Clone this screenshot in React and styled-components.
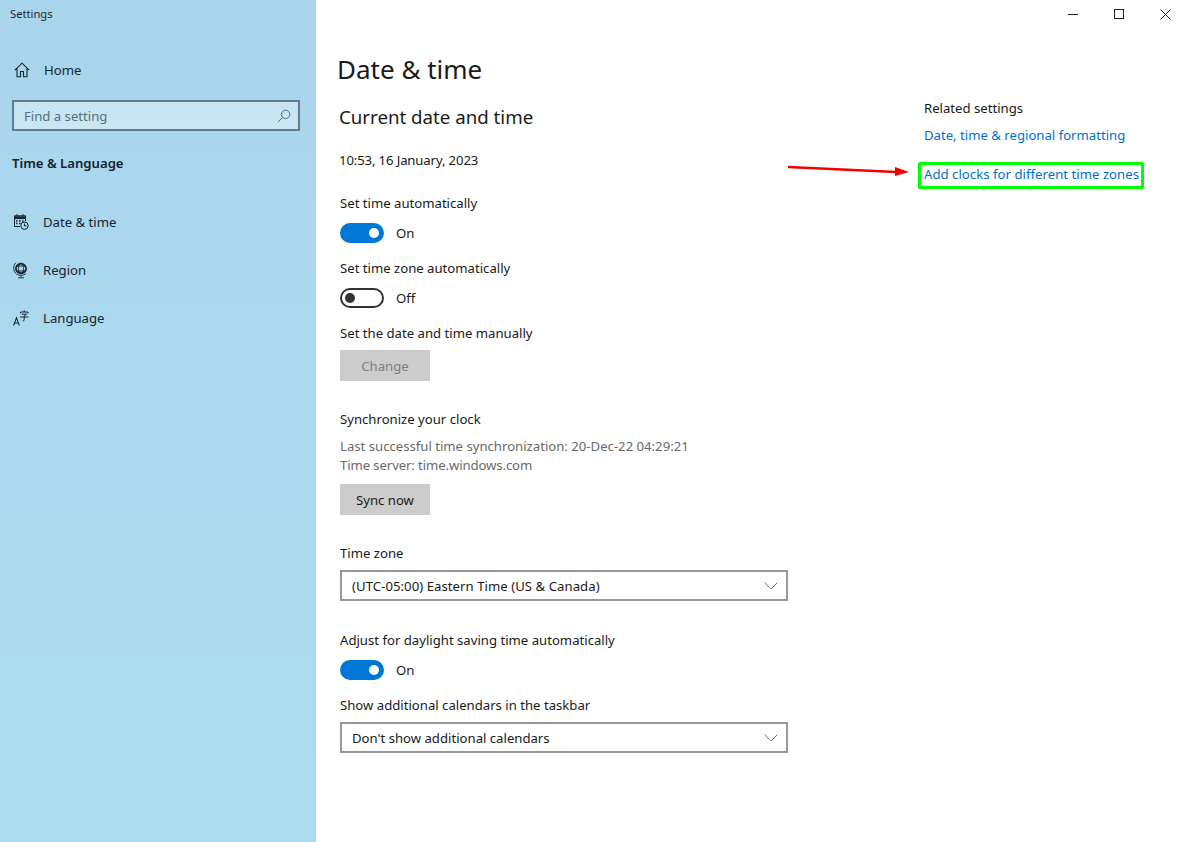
import React from 'react';
import styled, { createGlobalStyle } from 'styled-components';

const Global = createGlobalStyle`
  html, body { margin: 0; padding: 0; background: #fff; }
  body { font-family: "Noto Sans", "Open Sans", sans-serif; color: #1a1a1a; }
  #root { width: 1184px; height: 842px; overflow: hidden; }
`;

const Window = styled.div`
  position: relative;
  display: flex;
  width: 1184px;
  height: 842px;
  background: #fff;
  font-size: 13.15px;
  line-height: 20px;
`;
const Sidebar = styled.aside`
  width: 316px;
  flex: none;
  display: flex;
  flex-direction: column;
  background: linear-gradient(180deg, #a9d5ec 0%, #abd9ef 45%, #acdcf0 100%);
`;
const AppTitle = styled.div`
  font-size: 11.2px;
  line-height: 16px;
  padding: 6px 0 0 10px;
  color: #1c2a33;
`;
const NavItem = styled.div`
  display: flex;
  align-items: center;
  height: 48px;
  padding-left: ${p => p.$left || 13}px;
  gap: ${p => p.$gap || 14}px;
  color: #15252e;
  svg { flex: none; }
`;
const HomeItem = styled(NavItem)`
  margin-top: 24px;
`;
const Search = styled.div`
  margin: 6px 16px 0 12px;
  height: 31px;
  box-sizing: border-box;
  border: 2px solid #5f7f8f;
  background: linear-gradient(180deg, #c5e3f1, #cbe7f4);
  display: flex;
  align-items: center;
  justify-content: space-between;
  padding: 0 7px 0 10px;
  color: #5a6f7a;
`;
const SectionName = styled.div`
  margin: 22px 0 25px 12px;
  font-weight: 600;
  font-size: 13.15px;
  line-height: 20px;
  color: #14232b;
`;
const Main = styled.main`
  flex: 1;
  display: flex;
  min-width: 0;
`;
const Content = styled.div`
  width: 600px;
  flex: none;
  padding: 50px 0 0 22px;
  display: flex;
  flex-direction: column;
  box-sizing: border-box;
`;
const PageTitle = styled.h1`
  margin: 0 0 0 -1px;
  font-weight: 400;
  font-size: 26px;
  line-height: 38px;
  color: #1a1a1a;
`;
const SubTitle = styled.h2`
  margin: 15px 0 0 1px;
  font-weight: 400;
  font-size: 18.7px;
  line-height: 28px;
  color: #1a1a1a;
`;
const Text = styled.div`
  margin: ${p => p.$top || 0}px 0 0 ${p => p.$left ?? 2}px;
  color: ${p => p.$muted ? '#6a6a6a' : '#1a1a1a'};
  line-height: ${p => p.$lh || 20}px;
  letter-spacing: ${p => p.$ls || 0}px;
`;
const ToggleRow = styled.div`
  margin: 10px 0 0 2px;
  height: 20px;
  display: flex;
  align-items: center;
  gap: 12px;
`;
const Track = styled.span`
  position: relative;
  width: 44px;
  height: 20px;
  box-sizing: border-box;
  border-radius: 10px;
  border: 2px solid ${p => p.$on ? '#0078d7' : '#333'};
  background: ${p => p.$on ? '#0078d7' : '#fff'};
  &::after {
    content: '';
    position: absolute;
    top: 3px;
    ${p => p.$on ? 'right: 3px;' : 'left: 3px;'}
    width: 10px;
    height: 10px;
    border-radius: 50%;
    background: ${p => p.$on ? '#fff' : '#333'};
  }
`;
const Button = styled.div`
  margin: ${p => p.$top}px 0 0 2px;
  width: 90px;
  height: 31px;
  display: flex;
  align-items: center;
  justify-content: center;
  background: #cccccc;
  color: ${p => p.$disabled ? '#808080' : '#1a1a1a'};
`;
const Select = styled.div`
  margin: 7px 0 0 2px;
  width: 448px;
  height: 31px;
  box-sizing: border-box;
  border: 2px solid #999;
  display: flex;
  align-items: center;
  justify-content: space-between;
  padding: 0 8px 0 10px;
  color: #1a1a1a;
  letter-spacing: ${p => p.$ls || 0}px;
`;
const Aside = styled.div`
  padding: 98px 0 0 8px;
  display: flex;
  flex-direction: column;
  align-items: flex-start;
`;
const Link = styled.a`
  color: #0072cc;
  display: block;
  margin-top: ${p => p.$top || 0}px;
`;
const Highlight = styled.div`
  margin: 17px 0 0 -6px;
  width: 226px;
  height: 27px;
  box-sizing: border-box;
  border: 3px solid #00ff00;
  border-radius: 2px;
  display: flex;
  align-items: center;
  padding: 0 0 3px 3px;
  white-space: nowrap;
  letter-spacing: 0.03px;
`;
const CaptionControls = styled.div`
  position: absolute;
  top: 0;
  right: 0;
  display: flex;
  height: 28px;
`;
const CaptionBtn = styled.div`
  width: 46px;
  display: flex;
  align-items: center;
  padding-left: 22px;
  box-sizing: border-box;
`;
const Arrow = styled.svg`
  position: absolute;
  left: 786px;
  top: 160px;
`;

const Chevron = () => (
  <svg width="14" height="8" viewBox="0 0 14 8" fill="none" stroke="#777" strokeWidth="1">
    <path d="M.7.7 7 7l6.300-6.300" />
  </svg>
);
const Toggle = ({ on }) => (
  <ToggleRow>
    <Track $on={on} />
    <span>{on ? 'On' : 'Off'}</span>
  </ToggleRow>
);
const HomeIcon = () => (
  <svg width="16" height="16" viewBox="0 0 16 16" fill="none" stroke="#15252e" strokeWidth="1.1">
    <path d="M.8 8.200 8 1.200l7.200 7M3 6.500v8.300h3.500V9.500h3v5.300H13V6.500" />
  </svg>
);
const ClockCalIcon = () => (
  <svg width="16" height="16" viewBox="0 0 16 16" fill="none" stroke="#15252e" strokeWidth="1">
    <path d="M7 12.500H1.500V1.800h11V7" />
    <path d="M1.500 2.800h11v1.800h-11z" fill="#15252e" />
    <path d="M4 .2v2M10 .2v2" />
    <path d="M3 7h1.500M6 7h1.500M9 7h1.500M3 9.500h1.500M6 9.500h1.500" strokeWidth="1.300" />
    <circle cx="11.500" cy="11.700" r="3.700" fill="#abd7ed" />
    <path d="M11.500 9.500v2.400h2" />
  </svg>
);
const GlobeIcon = () => (
  <svg width="16" height="17" viewBox="0 0 16 17" fill="none" stroke="#15252e" strokeWidth=".9">
    <circle cx="8" cy="6.500" r="5.300" />
    <ellipse cx="8" cy="6.500" rx="2.500" ry="5.300" />
    <ellipse cx="8" cy="6.500" rx="4.300" ry="5.300" transform="rotate(60 8 6.500)" />
    <ellipse cx="8" cy="6.500" rx="4.300" ry="5.300" transform="rotate(-60 8 6.500)" />
    <path d="M3 4h10M2.800 9h10.400" />
    <path d="M2.800 .8C-.2 3.800 0 9.500 3.500 12c3 2 7 1.800 9.500-.5M8 13.500v2M5 15.800h6" />
  </svg>
);
const LangIcon = () => (
  <svg width="16" height="17" viewBox="0 0 16 17" fill="none" stroke="#15252e" strokeWidth="1.100">
    <path d="M.6 15.500 3.500 7.800l2.900 7.700M1.600 13h3.800" />
    <path d="M7.500 3.500V2h7.500v1.500M11.200.3v1.700M8.800 4.200h4.700l-2.300 1.800v3.800c0 .8-.5 1-1.500 1M7 7h8.500" strokeWidth="1" />
  </svg>
);

export default function App() {
  return (
    <>
      <Global />
      <Window>
        <Sidebar>
          <AppTitle>Settings</AppTitle>
          <HomeItem $left={14}>
            <HomeIcon />
            <span>Home</span>
          </HomeItem>
          <Search>
            <span>Find a setting</span>
            <svg width="14" height="14" viewBox="0 0 14 14" fill="none" stroke="#5a6f7a" strokeWidth="1">
              <circle cx="8.600" cy="5.400" r="4.200" />
              <path d="M5.500 8.500 1 13" />
            </svg>
          </Search>
          <SectionName>Time &amp; Language</SectionName>
          <NavItem><ClockCalIcon /><span>Date &amp; time</span></NavItem>
          <NavItem><GlobeIcon /><span>Region</span></NavItem>
          <NavItem><LangIcon /><span>Language</span></NavItem>
        </Sidebar>
        <Main>
          <Content>
            <PageTitle>Date &amp; time</PageTitle>
            <SubTitle>Current date and time</SubTitle>
            <Text $top={19} $left={1} $ls={-0.13}>10:53, 16 January, 2023</Text>
            <Text $top={23}>Set time automatically</Text>
            <Toggle on />
            <Text $top={15}>Set time zone automatically</Text>
            <Toggle />
            <Text $top={15}>Set the date and time manually</Text>
            <Button $top={7} $disabled>Change</Button>
            <Text $top={28}>Synchronize your clock</Text>
            <Text $top={8} $muted $lh={19}>Last successful time synchronization: 20-Dec-22 04:29:21</Text>
            <Text $muted $lh={19} $ls={-0.1}>Time server: time.windows.com</Text>
            <Button $top={9}>Sync now</Button>
            <Text $top={28}>Time zone</Text>
            <Select $ls={0.05}>(UTC-05:00) Eastern Time (US &amp; Canada)<Chevron /></Select>
            <Text $top={29}>Adjust for daylight saving time automatically</Text>
            <Toggle on />
            <Text $top={15}>Show additional calendars in the taskbar</Text>
            <Select>Don't show additional calendars<Chevron /></Select>
          </Content>
          <Aside>
            <Text $left={0}>Related settings</Text>
            <Link $top={7}>Date, time &amp; regional formatting</Link>
            <Highlight><Link>Add clocks for different time zones</Link></Highlight>
          </Aside>
        </Main>
        <Arrow width="134" height="22" viewBox="0 0 134 22">
          <path d="M2 7 110 12" stroke="#f00000" strokeWidth="2.400" fill="none" />
          <path d="M109 7 123 12 109 16Z" fill="#f00000" />
        </Arrow>
        <CaptionControls>
          <CaptionBtn>
            <svg width="11" height="11" viewBox="0 0 11 11" stroke="#222" fill="none"><path d="M0 5.500h10" /></svg>
          </CaptionBtn>
          <CaptionBtn>
            <svg width="11" height="11" viewBox="0 0 11 11" stroke="#222" fill="none"><rect x=".5" y=".5" width="9" height="9" /></svg>
          </CaptionBtn>
          <CaptionBtn>
            <svg width="11" height="11" viewBox="0 0 11 11" stroke="#222" fill="none"><path d="M.5.500l10 10M10.500.500l-10 10" /></svg>
          </CaptionBtn>
        </CaptionControls>
      </Window>
    </>
  );
}
